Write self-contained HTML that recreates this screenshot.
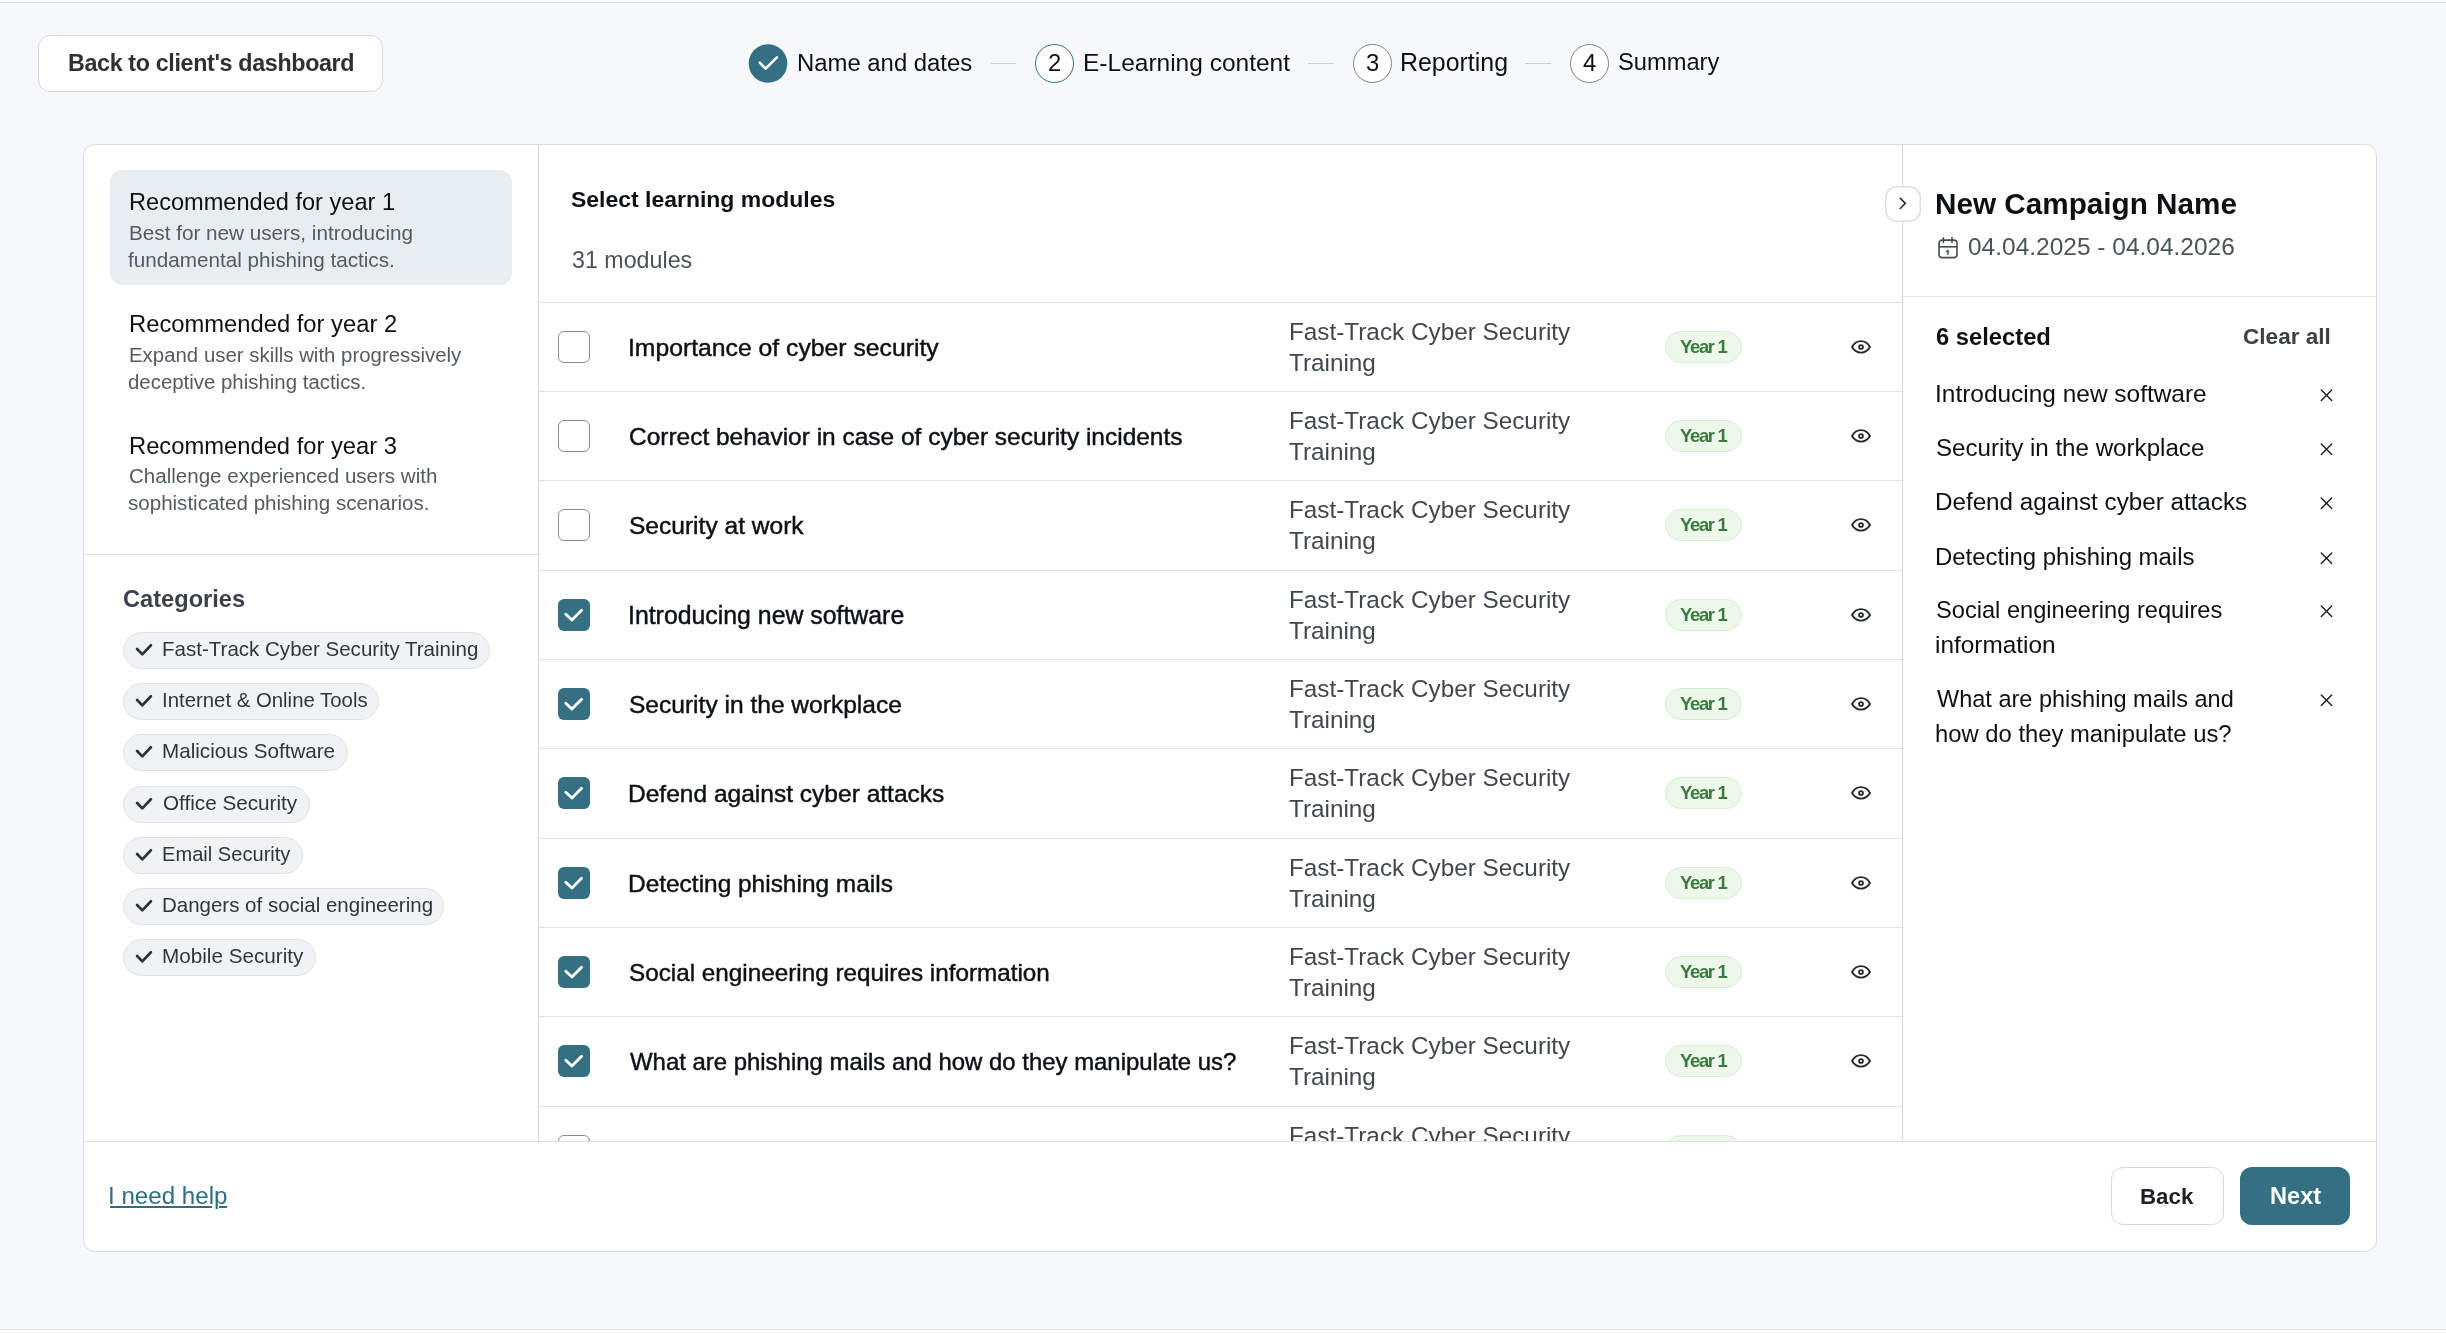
<!DOCTYPE html>
<html><head><meta charset="utf-8"><title>E-Learning content</title>
<style>
html,body{margin:0;padding:0;}
body{width:2446px;height:1334px;position:relative;overflow:hidden;background:#f7f8fa;font-family:"Liberation Sans", sans-serif;}
.t{position:absolute;white-space:nowrap;will-change:transform;}
.r{position:absolute;}
svg.r{overflow:visible;}
</style></head><body>
<div class="r" style="left:0px;top:0px;width:2446px;height:2px;background:#ffffff"></div>
<div class="r" style="left:0px;top:2px;width:2446px;height:1px;background:#dcdfe4"></div>
<div class="r" style="left:0px;top:1329px;width:2446px;height:5px;background:#ffffff"></div>
<div class="r" style="left:0px;top:1329px;width:2446px;height:1px;background:#dfe2e6"></div>
<div class="r" style="left:38px;top:35px;width:345px;height:57px;box-sizing:border-box;border:1.5px solid #d5d9dd;border-radius:12px;background:#fff"></div>
<div class="t" style="left:67.7px;top:52.1px;font-size:23.3px;line-height:23.3px;font-weight:700;color:#2b3136;letter-spacing:-0.36px;">Back to client's dashboard</div>
<svg class="r" style="left:748px;top:43px" width="40" height="41" viewBox="0 0 40 41"><circle cx="20" cy="20.5" r="19.3" fill="#346f82"/><polyline points="11.8,19.7 17.6,25.7 28.9,14.3" fill="none" stroke="#fff" stroke-width="2.6" stroke-linecap="round" stroke-linejoin="round"/></svg>
<div class="t" style="left:796.6px;top:51.0px;font-size:23.89px;line-height:23.89px;color:#0d1114;">Name and dates</div>
<div class="r" style="left:991px;top:63px;width:25px;height:1.3px;background:#c9d0d5"></div>
<div class="r" style="left:1035px;top:44px;width:39px;height:39px;box-sizing:border-box;border:1.4px solid #346f82;border-radius:50%;background:#fff"></div>
<div class="t" style="left:1047.5px;top:51.4px;font-size:23.9px;line-height:23.9px;color:#0d1114;">2</div>
<div class="t" style="left:1083.1px;top:50.5px;font-size:24.5px;line-height:24.5px;color:#0d1114;">E-Learning content</div>
<div class="r" style="left:1308px;top:63px;width:26px;height:1.3px;background:#c9d0d5"></div>
<div class="r" style="left:1353px;top:44px;width:39px;height:39px;box-sizing:border-box;border:1.3px solid #7d858c;border-radius:50%;background:#fff"></div>
<div class="t" style="left:1365.5px;top:51.4px;font-size:23.9px;line-height:23.9px;color:#0d1114;">3</div>
<div class="t" style="left:1400.0px;top:50.1px;font-size:24.92px;line-height:24.92px;color:#0d1114;">Reporting</div>
<div class="r" style="left:1525px;top:63px;width:26px;height:1.3px;background:#c9d0d5"></div>
<div class="r" style="left:1570px;top:44px;width:39px;height:39px;box-sizing:border-box;border:1.3px solid #7d858c;border-radius:50%;background:#fff"></div>
<div class="t" style="left:1582.5px;top:51.4px;font-size:23.9px;line-height:23.9px;color:#0d1114;">4</div>
<div class="t" style="left:1618.0px;top:51.1px;font-size:23.7px;line-height:23.7px;color:#0d1114;">Summary</div>
<div class="r" style="left:83px;top:144px;width:2294px;height:1108px;box-sizing:border-box;border:1px solid #d9dde1;border-radius:12px;background:#fff"></div>
<div class="r" style="left:538px;top:145px;width:1px;height:996px;background:#d5d9dd"></div>
<div class="r" style="left:1902px;top:145px;width:1px;height:996px;background:#d5d9dd"></div>
<div class="r" style="left:84px;top:1141px;width:2292px;height:1px;background:#dfe2e6"></div>
<div class="r" style="left:84px;top:554px;width:454px;height:1px;background:#dfe2e6"></div>
<div class="r" style="left:539px;top:302px;width:1363px;height:1px;background:#dfe2e6"></div>
<div class="r" style="left:1903px;top:296px;width:473px;height:1px;background:#dfe2e6"></div>
<div class="r" style="left:110px;top:170px;width:402px;height:115px;background:#e7edf0;border-radius:12px"></div>
<div class="t" style="left:129.2px;top:190.5px;font-size:23.59px;line-height:23.59px;color:#0d1114;">Recommended for year 1</div>
<div class="t" style="left:128.6px;top:222.6px;font-size:20.69px;line-height:20.69px;color:#535b63;">Best for new users, introducing</div>
<div class="t" style="left:128.1px;top:249.6px;font-size:20.69px;line-height:20.69px;color:#535b63;">fundamental phishing tactics.</div>
<div class="t" style="left:129.2px;top:312.4px;font-size:23.78px;line-height:23.78px;color:#0d1114;">Recommended for year 2</div>
<div class="t" style="left:128.7px;top:344.8px;font-size:20.41px;line-height:20.41px;color:#535b63;">Expand user skills with progressively</div>
<div class="t" style="left:128.1px;top:371.8px;font-size:20.41px;line-height:20.41px;color:#535b63;">deceptive phishing tactics.</div>
<div class="t" style="left:129.2px;top:433.5px;font-size:23.75px;line-height:23.75px;color:#0d1114;">Recommended for year 3</div>
<div class="t" style="left:129.3px;top:465.8px;font-size:20.55px;line-height:20.55px;color:#535b63;">Challenge experienced users with</div>
<div class="t" style="left:128.1px;top:492.8px;font-size:20.55px;line-height:20.55px;color:#535b63;">sophisticated phishing scenarios.</div>
<div class="t" style="left:122.6px;top:587.7px;font-size:23.63px;line-height:23.63px;font-weight:700;color:#3a4148;">Categories</div>
<div class="r" style="left:123px;top:632.0px;width:366.6px;height:37px;box-sizing:border-box;border:1.2px solid #e1e4e7;border-radius:19px;background:#f0f2f4"></div>
<svg class="r" style="left:130px;top:632.0px" width="30" height="37" viewBox="0 0 30 37"><polyline points="7.1,17 12.3,22.4 20.9,13.3" fill="none" stroke="#2d3237" stroke-width="2.7" stroke-linecap="round" stroke-linejoin="round"/></svg>
<div class="t" style="left:162.4px;top:639.1px;font-size:20.54px;line-height:20.54px;color:#30363c;">Fast-Track Cyber Security Training</div>
<div class="r" style="left:123px;top:683.2px;width:256.4px;height:37px;box-sizing:border-box;border:1.2px solid #e1e4e7;border-radius:19px;background:#f0f2f4"></div>
<svg class="r" style="left:130px;top:683.2px" width="30" height="37" viewBox="0 0 30 37"><polyline points="7.1,17 12.3,22.4 20.9,13.3" fill="none" stroke="#2d3237" stroke-width="2.7" stroke-linecap="round" stroke-linejoin="round"/></svg>
<div class="t" style="left:162.2px;top:690.4px;font-size:20.38px;line-height:20.38px;color:#30363c;">Internet &amp; Online Tools</div>
<div class="r" style="left:123px;top:734.4px;width:224.8px;height:37px;box-sizing:border-box;border:1.2px solid #e1e4e7;border-radius:19px;background:#f0f2f4"></div>
<svg class="r" style="left:130px;top:734.4px" width="30" height="37" viewBox="0 0 30 37"><polyline points="7.1,17 12.3,22.4 20.9,13.3" fill="none" stroke="#2d3237" stroke-width="2.7" stroke-linecap="round" stroke-linejoin="round"/></svg>
<div class="t" style="left:162.3px;top:741.4px;font-size:20.64px;line-height:20.64px;color:#30363c;">Malicious Software</div>
<div class="r" style="left:123px;top:785.6px;width:186.8px;height:37px;box-sizing:border-box;border:1.2px solid #e1e4e7;border-radius:19px;background:#f0f2f4"></div>
<svg class="r" style="left:130px;top:785.6px" width="30" height="37" viewBox="0 0 30 37"><polyline points="7.1,17 12.3,22.4 20.9,13.3" fill="none" stroke="#2d3237" stroke-width="2.7" stroke-linecap="round" stroke-linejoin="round"/></svg>
<div class="t" style="left:163.0px;top:792.6px;font-size:20.7px;line-height:20.7px;color:#30363c;">Office Security</div>
<div class="r" style="left:123px;top:836.8px;width:180px;height:37px;box-sizing:border-box;border:1.2px solid #e1e4e7;border-radius:19px;background:#f0f2f4"></div>
<svg class="r" style="left:130px;top:836.8px" width="30" height="37" viewBox="0 0 30 37"><polyline points="7.1,17 12.3,22.4 20.9,13.3" fill="none" stroke="#2d3237" stroke-width="2.7" stroke-linecap="round" stroke-linejoin="round"/></svg>
<div class="t" style="left:162.4px;top:844.3px;font-size:20.1px;line-height:20.1px;color:#30363c;">Email Security</div>
<div class="r" style="left:123px;top:888.0px;width:321.4px;height:37px;box-sizing:border-box;border:1.2px solid #e1e4e7;border-radius:19px;background:#f0f2f4"></div>
<svg class="r" style="left:130px;top:888.0px" width="30" height="37" viewBox="0 0 30 37"><polyline points="7.1,17 12.3,22.4 20.9,13.3" fill="none" stroke="#2d3237" stroke-width="2.7" stroke-linecap="round" stroke-linejoin="round"/></svg>
<div class="t" style="left:162.4px;top:895.2px;font-size:20.49px;line-height:20.49px;color:#30363c;">Dangers of social engineering</div>
<div class="r" style="left:123px;top:939.2px;width:192.8px;height:37px;box-sizing:border-box;border:1.2px solid #e1e4e7;border-radius:19px;background:#f0f2f4"></div>
<svg class="r" style="left:130px;top:939.2px" width="30" height="37" viewBox="0 0 30 37"><polyline points="7.1,17 12.3,22.4 20.9,13.3" fill="none" stroke="#2d3237" stroke-width="2.7" stroke-linecap="round" stroke-linejoin="round"/></svg>
<div class="t" style="left:162.3px;top:946.2px;font-size:20.68px;line-height:20.68px;color:#30363c;">Mobile Security</div>
<div class="t" style="left:571.2px;top:187.9px;font-size:22.97px;line-height:22.97px;font-weight:700;color:#0d1114;">Select learning modules</div>
<div class="t" style="left:571.6px;top:248.9px;font-size:23.26px;line-height:23.26px;color:#4a525a;">31 modules</div>
<div class="r" style="left:539px;top:303px;width:1363px;height:838px;overflow:hidden">
<div class="r" style="left:19.2px;top:28.0px;width:32px;height:32px;box-sizing:border-box;border:1.5px solid #868d94;border-radius:6px;background:#fff"></div>
<div class="t" style="left:88.6px;top:32.7px;font-size:24.74px;line-height:24.74px;color:#0d1114;-webkit-text-stroke:0.45px #0d1114;">Importance of cyber security</div>
<div class="t" style="left:749.9px;top:17.4px;font-size:24.31px;line-height:24.31px;color:#41474e;">Fast-Track Cyber Security</div>
<div class="t" style="left:749.9px;top:48.4px;font-size:24.31px;line-height:24.31px;color:#41474e;">Training</div>
<div class="r" style="left:1125.5px;top:28.0px;width:77px;height:32px;box-sizing:border-box;border:1.2px solid #d6f0d2;border-radius:16px;background:#edf8eb"></div>
<div class="t" style="left:1140.8px;top:34.9px;font-size:18.5px;line-height:18.5px;font-weight:700;color:#3b7b40;letter-spacing:-1.35px;">Year 1</div>
<svg class="r" style="left:1309.9px;top:31.6px" width="24" height="24" viewBox="0 0 24 24"><path d="M21,12 C18.6,16 15.6,17.6 12,17.6 C8.4,17.6 5.4,16 3,12 C5.4,7.8 8.4,6.1 12,6.1 C15.6,6.1 18.6,7.8 21,12 Z" fill="none" stroke="#23282d" stroke-width="1.9" stroke-linejoin="round"/><circle cx="12" cy="12" r="1.95" fill="none" stroke="#23282d" stroke-width="1.8"/></svg>
<div class="r" style="left:0px;top:88px;width:1363px;height:1px;background:#dfe2e6"></div>
<div class="r" style="left:19.2px;top:117.0px;width:32px;height:32px;box-sizing:border-box;border:1.5px solid #868d94;border-radius:6px;background:#fff"></div>
<div class="t" style="left:89.6px;top:121.9px;font-size:24.47px;line-height:24.47px;color:#0d1114;-webkit-text-stroke:0.45px #0d1114;">Correct behavior in case of cyber security incidents</div>
<div class="t" style="left:749.9px;top:106.4px;font-size:24.31px;line-height:24.31px;color:#41474e;">Fast-Track Cyber Security</div>
<div class="t" style="left:749.9px;top:137.4px;font-size:24.31px;line-height:24.31px;color:#41474e;">Training</div>
<div class="r" style="left:1125.5px;top:117.0px;width:77px;height:32px;box-sizing:border-box;border:1.2px solid #d6f0d2;border-radius:16px;background:#edf8eb"></div>
<div class="t" style="left:1140.8px;top:123.9px;font-size:18.5px;line-height:18.5px;font-weight:700;color:#3b7b40;letter-spacing:-1.35px;">Year 1</div>
<svg class="r" style="left:1309.9px;top:120.6px" width="24" height="24" viewBox="0 0 24 24"><path d="M21,12 C18.6,16 15.6,17.6 12,17.6 C8.4,17.6 5.4,16 3,12 C5.4,7.8 8.4,6.1 12,6.1 C15.6,6.1 18.6,7.8 21,12 Z" fill="none" stroke="#23282d" stroke-width="1.9" stroke-linejoin="round"/><circle cx="12" cy="12" r="1.95" fill="none" stroke="#23282d" stroke-width="1.8"/></svg>
<div class="r" style="left:0px;top:177px;width:1363px;height:1px;background:#dfe2e6"></div>
<div class="r" style="left:19.2px;top:206.0px;width:32px;height:32px;box-sizing:border-box;border:1.5px solid #868d94;border-radius:6px;background:#fff"></div>
<div class="t" style="left:89.6px;top:210.8px;font-size:24.55px;line-height:24.55px;color:#0d1114;-webkit-text-stroke:0.45px #0d1114;">Security at work</div>
<div class="t" style="left:749.9px;top:195.4px;font-size:24.31px;line-height:24.31px;color:#41474e;">Fast-Track Cyber Security</div>
<div class="t" style="left:749.9px;top:226.4px;font-size:24.31px;line-height:24.31px;color:#41474e;">Training</div>
<div class="r" style="left:1125.5px;top:206.0px;width:77px;height:32px;box-sizing:border-box;border:1.2px solid #d6f0d2;border-radius:16px;background:#edf8eb"></div>
<div class="t" style="left:1140.8px;top:212.9px;font-size:18.5px;line-height:18.5px;font-weight:700;color:#3b7b40;letter-spacing:-1.35px;">Year 1</div>
<svg class="r" style="left:1309.9px;top:209.6px" width="24" height="24" viewBox="0 0 24 24"><path d="M21,12 C18.6,16 15.6,17.6 12,17.6 C8.4,17.6 5.4,16 3,12 C5.4,7.8 8.4,6.1 12,6.1 C15.6,6.1 18.6,7.8 21,12 Z" fill="none" stroke="#23282d" stroke-width="1.9" stroke-linejoin="round"/><circle cx="12" cy="12" r="1.95" fill="none" stroke="#23282d" stroke-width="1.8"/></svg>
<div class="r" style="left:0px;top:267px;width:1363px;height:1px;background:#dfe2e6"></div>
<svg class="r" style="left:19.2px;top:296.0px" width="32" height="32" viewBox="0 0 32 32"><rect x="0" y="0" width="32" height="32" rx="6" fill="#346f82"/><polyline points="7.8,15.3 13.9,21.1 23.6,11.2" fill="none" stroke="#fff" stroke-width="2.8" stroke-linecap="round" stroke-linejoin="round"/></svg>
<div class="t" style="left:88.6px;top:300.6px;font-size:24.85px;line-height:24.85px;color:#0d1114;-webkit-text-stroke:0.45px #0d1114;">Introducing new software</div>
<div class="t" style="left:749.9px;top:285.4px;font-size:24.31px;line-height:24.31px;color:#41474e;">Fast-Track Cyber Security</div>
<div class="t" style="left:749.9px;top:316.4px;font-size:24.31px;line-height:24.31px;color:#41474e;">Training</div>
<div class="r" style="left:1125.5px;top:296.0px;width:77px;height:32px;box-sizing:border-box;border:1.2px solid #d6f0d2;border-radius:16px;background:#edf8eb"></div>
<div class="t" style="left:1140.8px;top:302.9px;font-size:18.5px;line-height:18.5px;font-weight:700;color:#3b7b40;letter-spacing:-1.35px;">Year 1</div>
<svg class="r" style="left:1309.9px;top:299.6px" width="24" height="24" viewBox="0 0 24 24"><path d="M21,12 C18.6,16 15.6,17.6 12,17.6 C8.4,17.6 5.4,16 3,12 C5.4,7.8 8.4,6.1 12,6.1 C15.6,6.1 18.6,7.8 21,12 Z" fill="none" stroke="#23282d" stroke-width="1.9" stroke-linejoin="round"/><circle cx="12" cy="12" r="1.95" fill="none" stroke="#23282d" stroke-width="1.8"/></svg>
<div class="r" style="left:0px;top:356px;width:1363px;height:1px;background:#dfe2e6"></div>
<svg class="r" style="left:19.2px;top:385.0px" width="32" height="32" viewBox="0 0 32 32"><rect x="0" y="0" width="32" height="32" rx="6" fill="#346f82"/><polyline points="7.8,15.3 13.9,21.1 23.6,11.2" fill="none" stroke="#fff" stroke-width="2.8" stroke-linecap="round" stroke-linejoin="round"/></svg>
<div class="t" style="left:89.6px;top:389.8px;font-size:24.55px;line-height:24.55px;color:#0d1114;-webkit-text-stroke:0.45px #0d1114;">Security in the workplace</div>
<div class="t" style="left:749.9px;top:374.4px;font-size:24.31px;line-height:24.31px;color:#41474e;">Fast-Track Cyber Security</div>
<div class="t" style="left:749.9px;top:405.4px;font-size:24.31px;line-height:24.31px;color:#41474e;">Training</div>
<div class="r" style="left:1125.5px;top:385.0px;width:77px;height:32px;box-sizing:border-box;border:1.2px solid #d6f0d2;border-radius:16px;background:#edf8eb"></div>
<div class="t" style="left:1140.8px;top:391.9px;font-size:18.5px;line-height:18.5px;font-weight:700;color:#3b7b40;letter-spacing:-1.35px;">Year 1</div>
<svg class="r" style="left:1309.9px;top:388.6px" width="24" height="24" viewBox="0 0 24 24"><path d="M21,12 C18.6,16 15.6,17.6 12,17.6 C8.4,17.6 5.4,16 3,12 C5.4,7.8 8.4,6.1 12,6.1 C15.6,6.1 18.6,7.8 21,12 Z" fill="none" stroke="#23282d" stroke-width="1.9" stroke-linejoin="round"/><circle cx="12" cy="12" r="1.95" fill="none" stroke="#23282d" stroke-width="1.8"/></svg>
<div class="r" style="left:0px;top:445px;width:1363px;height:1px;background:#dfe2e6"></div>
<svg class="r" style="left:19.2px;top:474.0px" width="32" height="32" viewBox="0 0 32 32"><rect x="0" y="0" width="32" height="32" rx="6" fill="#346f82"/><polyline points="7.8,15.3 13.9,21.1 23.6,11.2" fill="none" stroke="#fff" stroke-width="2.8" stroke-linecap="round" stroke-linejoin="round"/></svg>
<div class="t" style="left:88.8px;top:478.8px;font-size:24.54px;line-height:24.54px;color:#0d1114;-webkit-text-stroke:0.45px #0d1114;">Defend against cyber attacks</div>
<div class="t" style="left:749.9px;top:463.4px;font-size:24.31px;line-height:24.31px;color:#41474e;">Fast-Track Cyber Security</div>
<div class="t" style="left:749.9px;top:494.4px;font-size:24.31px;line-height:24.31px;color:#41474e;">Training</div>
<div class="r" style="left:1125.5px;top:474.0px;width:77px;height:32px;box-sizing:border-box;border:1.2px solid #d6f0d2;border-radius:16px;background:#edf8eb"></div>
<div class="t" style="left:1140.8px;top:480.9px;font-size:18.5px;line-height:18.5px;font-weight:700;color:#3b7b40;letter-spacing:-1.35px;">Year 1</div>
<svg class="r" style="left:1309.9px;top:477.6px" width="24" height="24" viewBox="0 0 24 24"><path d="M21,12 C18.6,16 15.6,17.6 12,17.6 C8.4,17.6 5.4,16 3,12 C5.4,7.8 8.4,6.1 12,6.1 C15.6,6.1 18.6,7.8 21,12 Z" fill="none" stroke="#23282d" stroke-width="1.9" stroke-linejoin="round"/><circle cx="12" cy="12" r="1.95" fill="none" stroke="#23282d" stroke-width="1.8"/></svg>
<div class="r" style="left:0px;top:535px;width:1363px;height:1px;background:#dfe2e6"></div>
<svg class="r" style="left:19.2px;top:564.0px" width="32" height="32" viewBox="0 0 32 32"><rect x="0" y="0" width="32" height="32" rx="6" fill="#346f82"/><polyline points="7.8,15.3 13.9,21.1 23.6,11.2" fill="none" stroke="#fff" stroke-width="2.8" stroke-linecap="round" stroke-linejoin="round"/></svg>
<div class="t" style="left:88.8px;top:568.9px;font-size:24.44px;line-height:24.44px;color:#0d1114;-webkit-text-stroke:0.45px #0d1114;">Detecting phishing mails</div>
<div class="t" style="left:749.9px;top:553.4px;font-size:24.31px;line-height:24.31px;color:#41474e;">Fast-Track Cyber Security</div>
<div class="t" style="left:749.9px;top:584.4px;font-size:24.31px;line-height:24.31px;color:#41474e;">Training</div>
<div class="r" style="left:1125.5px;top:564.0px;width:77px;height:32px;box-sizing:border-box;border:1.2px solid #d6f0d2;border-radius:16px;background:#edf8eb"></div>
<div class="t" style="left:1140.8px;top:570.9px;font-size:18.5px;line-height:18.5px;font-weight:700;color:#3b7b40;letter-spacing:-1.35px;">Year 1</div>
<svg class="r" style="left:1309.9px;top:567.6px" width="24" height="24" viewBox="0 0 24 24"><path d="M21,12 C18.6,16 15.6,17.6 12,17.6 C8.4,17.6 5.4,16 3,12 C5.4,7.8 8.4,6.1 12,6.1 C15.6,6.1 18.6,7.8 21,12 Z" fill="none" stroke="#23282d" stroke-width="1.9" stroke-linejoin="round"/><circle cx="12" cy="12" r="1.95" fill="none" stroke="#23282d" stroke-width="1.8"/></svg>
<div class="r" style="left:0px;top:624px;width:1363px;height:1px;background:#dfe2e6"></div>
<svg class="r" style="left:19.2px;top:653.0px" width="32" height="32" viewBox="0 0 32 32"><rect x="0" y="0" width="32" height="32" rx="6" fill="#346f82"/><polyline points="7.8,15.3 13.9,21.1 23.6,11.2" fill="none" stroke="#fff" stroke-width="2.8" stroke-linecap="round" stroke-linejoin="round"/></svg>
<div class="t" style="left:89.6px;top:658.1px;font-size:24.27px;line-height:24.27px;color:#0d1114;-webkit-text-stroke:0.45px #0d1114;">Social engineering requires information</div>
<div class="t" style="left:749.9px;top:642.4px;font-size:24.31px;line-height:24.31px;color:#41474e;">Fast-Track Cyber Security</div>
<div class="t" style="left:749.9px;top:673.4px;font-size:24.31px;line-height:24.31px;color:#41474e;">Training</div>
<div class="r" style="left:1125.5px;top:653.0px;width:77px;height:32px;box-sizing:border-box;border:1.2px solid #d6f0d2;border-radius:16px;background:#edf8eb"></div>
<div class="t" style="left:1140.8px;top:659.9px;font-size:18.5px;line-height:18.5px;font-weight:700;color:#3b7b40;letter-spacing:-1.35px;">Year 1</div>
<svg class="r" style="left:1309.9px;top:656.6px" width="24" height="24" viewBox="0 0 24 24"><path d="M21,12 C18.6,16 15.6,17.6 12,17.6 C8.4,17.6 5.4,16 3,12 C5.4,7.8 8.4,6.1 12,6.1 C15.6,6.1 18.6,7.8 21,12 Z" fill="none" stroke="#23282d" stroke-width="1.9" stroke-linejoin="round"/><circle cx="12" cy="12" r="1.95" fill="none" stroke="#23282d" stroke-width="1.8"/></svg>
<div class="r" style="left:0px;top:713px;width:1363px;height:1px;background:#dfe2e6"></div>
<svg class="r" style="left:19.2px;top:742.0px" width="32" height="32" viewBox="0 0 32 32"><rect x="0" y="0" width="32" height="32" rx="6" fill="#346f82"/><polyline points="7.8,15.3 13.9,21.1 23.6,11.2" fill="none" stroke="#fff" stroke-width="2.8" stroke-linecap="round" stroke-linejoin="round"/></svg>
<div class="t" style="left:90.6px;top:747.3px;font-size:23.93px;line-height:23.93px;color:#0d1114;-webkit-text-stroke:0.45px #0d1114;">What are phishing mails and how do they manipulate us?</div>
<div class="t" style="left:749.9px;top:731.4px;font-size:24.31px;line-height:24.31px;color:#41474e;">Fast-Track Cyber Security</div>
<div class="t" style="left:749.9px;top:762.4px;font-size:24.31px;line-height:24.31px;color:#41474e;">Training</div>
<div class="r" style="left:1125.5px;top:742.0px;width:77px;height:32px;box-sizing:border-box;border:1.2px solid #d6f0d2;border-radius:16px;background:#edf8eb"></div>
<div class="t" style="left:1140.8px;top:748.9px;font-size:18.5px;line-height:18.5px;font-weight:700;color:#3b7b40;letter-spacing:-1.35px;">Year 1</div>
<svg class="r" style="left:1309.9px;top:745.6px" width="24" height="24" viewBox="0 0 24 24"><path d="M21,12 C18.6,16 15.6,17.6 12,17.6 C8.4,17.6 5.4,16 3,12 C5.4,7.8 8.4,6.1 12,6.1 C15.6,6.1 18.6,7.8 21,12 Z" fill="none" stroke="#23282d" stroke-width="1.9" stroke-linejoin="round"/><circle cx="12" cy="12" r="1.95" fill="none" stroke="#23282d" stroke-width="1.8"/></svg>
<div class="r" style="left:0px;top:803px;width:1363px;height:1px;background:#dfe2e6"></div>
<div class="r" style="left:19.2px;top:832.0px;width:32px;height:32px;box-sizing:border-box;border:1.5px solid #868d94;border-radius:6px;background:#fff"></div>
<div class="t" style="left:749.9px;top:821.4px;font-size:24.31px;line-height:24.31px;color:#41474e;">Fast-Track Cyber Security</div>
<div class="t" style="left:749.9px;top:852.4px;font-size:24.31px;line-height:24.31px;color:#41474e;">Training</div>
<div class="r" style="left:1125.5px;top:832.0px;width:77px;height:32px;box-sizing:border-box;border:1.2px solid #d6f0d2;border-radius:16px;background:#edf8eb"></div>
<div class="t" style="left:1140.8px;top:838.9px;font-size:18.5px;line-height:18.5px;font-weight:700;color:#3b7b40;letter-spacing:-1.35px;">Year 1</div>
<svg class="r" style="left:1309.9px;top:835.6px" width="24" height="24" viewBox="0 0 24 24"><path d="M21,12 C18.6,16 15.6,17.6 12,17.6 C8.4,17.6 5.4,16 3,12 C5.4,7.8 8.4,6.1 12,6.1 C15.6,6.1 18.6,7.8 21,12 Z" fill="none" stroke="#23282d" stroke-width="1.9" stroke-linejoin="round"/><circle cx="12" cy="12" r="1.95" fill="none" stroke="#23282d" stroke-width="1.8"/></svg>
</div>
<svg class="r" style="left:1885px;top:186px" width="36" height="36" viewBox="0 0 36 36"><rect x="0.75" y="0.75" width="34.5" height="34.5" rx="11" fill="#fff" stroke="#dcdfe3" stroke-width="1.5"/><polyline points="15.3,12.4 20.4,17.4 15.2,22.5" fill="none" stroke="#2c3136" stroke-width="1.7" stroke-linecap="round" stroke-linejoin="round"/></svg>
<div class="t" style="left:1935.1px;top:189.0px;font-size:29.69px;line-height:29.69px;font-weight:700;color:#0d1114;">New Campaign Name</div>
<svg class="r" style="left:1936px;top:236px" width="24" height="24" viewBox="0 0 24 24"><rect x="3" y="4.1" width="18" height="17.5" rx="3.2" fill="none" stroke="#454b53" stroke-width="1.6"/><line x1="3" y1="10.8" x2="21" y2="10.8" stroke="#454b53" stroke-width="1.6"/><line x1="7.4" y1="1.8" x2="7.4" y2="6.4" stroke="#454b53" stroke-width="1.6" stroke-linecap="round"/><line x1="16" y1="1.8" x2="16" y2="6.4" stroke="#454b53" stroke-width="1.6" stroke-linecap="round"/><path d="M10.6,15.3 L12,14.6 L12,18.2" fill="none" stroke="#454b53" stroke-width="1.5" stroke-linecap="round" stroke-linejoin="round"/></svg>
<div class="t" style="left:1968.1px;top:235.0px;font-size:24.49px;line-height:24.49px;color:#4b535b;">04.04.2025 - 04.04.2026</div>
<div class="t" style="left:1935.9px;top:325.1px;font-size:23.76px;line-height:23.76px;font-weight:700;color:#0d1114;">6 selected</div>
<div class="t" style="left:2243.3px;top:326.1px;font-size:22.59px;line-height:22.59px;font-weight:700;color:#3a4148;">Clear all</div>
<div class="t" style="left:1934.6px;top:382.2px;font-size:24.44px;line-height:24.44px;color:#0d1114;">Introducing new software</div>
<svg class="r" style="left:2314px;top:383.0px" width="24" height="24" viewBox="0 0 24 24"><line x1="7.3" y1="7" x2="17.7" y2="17.4" stroke="#1d2226" stroke-width="1.45" stroke-linecap="round"/><line x1="17.7" y1="7" x2="7.3" y2="17.4" stroke="#1d2226" stroke-width="1.45" stroke-linecap="round"/></svg>
<div class="t" style="left:1935.6px;top:436.2px;font-size:24.15px;line-height:24.15px;color:#0d1114;">Security in the workplace</div>
<svg class="r" style="left:2314px;top:436.7px" width="24" height="24" viewBox="0 0 24 24"><line x1="7.3" y1="7" x2="17.7" y2="17.4" stroke="#1d2226" stroke-width="1.45" stroke-linecap="round"/><line x1="17.7" y1="7" x2="7.3" y2="17.4" stroke="#1d2226" stroke-width="1.45" stroke-linecap="round"/></svg>
<div class="t" style="left:1934.9px;top:490.0px;font-size:24.21px;line-height:24.21px;color:#0d1114;">Defend against cyber attacks</div>
<svg class="r" style="left:2314px;top:490.6px" width="24" height="24" viewBox="0 0 24 24"><line x1="7.3" y1="7" x2="17.7" y2="17.4" stroke="#1d2226" stroke-width="1.45" stroke-linecap="round"/><line x1="17.7" y1="7" x2="7.3" y2="17.4" stroke="#1d2226" stroke-width="1.45" stroke-linecap="round"/></svg>
<div class="t" style="left:1934.9px;top:545.3px;font-size:23.95px;line-height:23.95px;color:#0d1114;">Detecting phishing mails</div>
<svg class="r" style="left:2314px;top:545.7px" width="24" height="24" viewBox="0 0 24 24"><line x1="7.3" y1="7" x2="17.7" y2="17.4" stroke="#1d2226" stroke-width="1.45" stroke-linecap="round"/><line x1="17.7" y1="7" x2="7.3" y2="17.4" stroke="#1d2226" stroke-width="1.45" stroke-linecap="round"/></svg>
<div class="t" style="left:1935.6px;top:599.1px;font-size:23.63px;line-height:23.63px;color:#0d1114;">Social engineering requires</div>
<div class="t" style="left:1935.1px;top:633.0px;font-size:24.37px;line-height:24.37px;color:#0d1114;">information</div>
<svg class="r" style="left:2314px;top:599.2px" width="24" height="24" viewBox="0 0 24 24"><line x1="7.3" y1="7" x2="17.7" y2="17.4" stroke="#1d2226" stroke-width="1.45" stroke-linecap="round"/><line x1="17.7" y1="7" x2="7.3" y2="17.4" stroke="#1d2226" stroke-width="1.45" stroke-linecap="round"/></svg>
<div class="t" style="left:1936.6px;top:688.0px;font-size:23.53px;line-height:23.53px;color:#0d1114;">What are phishing mails and</div>
<div class="t" style="left:1935.1px;top:722.2px;font-size:23.82px;line-height:23.82px;color:#0d1114;">how do they manipulate us?</div>
<svg class="r" style="left:2314px;top:688.0px" width="24" height="24" viewBox="0 0 24 24"><line x1="7.3" y1="7" x2="17.7" y2="17.4" stroke="#1d2226" stroke-width="1.45" stroke-linecap="round"/><line x1="17.7" y1="7" x2="7.3" y2="17.4" stroke="#1d2226" stroke-width="1.45" stroke-linecap="round"/></svg>
<div class="t" style="left:108.4px;top:1184.0px;font-size:24.15px;line-height:24.15px;color:#2f6d80;">I need help</div>
<div class="r" style="left:110px;top:1206px;width:102px;height:2px;background:#2f6d80"></div>
<div class="r" style="left:219px;top:1206px;width:7.5px;height:2px;background:#2f6d80"></div>
<div class="r" style="left:2111px;top:1167px;width:113px;height:58px;box-sizing:border-box;border:1.5px solid #d5d9dd;border-radius:12px;background:#fff"></div>
<div class="t" style="left:2140.4px;top:1185.9px;font-size:22.33px;line-height:22.33px;font-weight:700;color:#1b2025;">Back</div>
<div class="r" style="left:2240px;top:1167px;width:110px;height:58px;border-radius:12px;background:#346f82"></div>
<div class="t" style="left:2269.5px;top:1184.8px;font-size:23.59px;line-height:23.59px;font-weight:700;color:#ffffff;">Next</div>
</body></html>
